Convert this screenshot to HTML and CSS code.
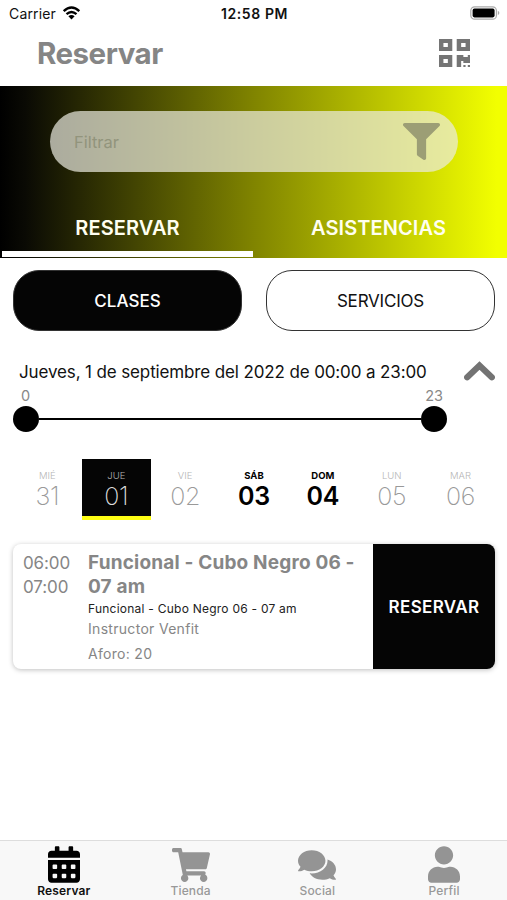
FILE: index.html
```html
<!DOCTYPE html>
<html lang="es">
<head>
<meta charset="utf-8">
<title>Reservar</title>
<link rel="stylesheet" href="styles.css">
</head>
<body>
<div class="app">
  <div class="status">
    <span class="carrier"><span class="carrier-name">Carrier</span>
      <svg class="wifi" viewBox="0 0 18 14"><path d="M1.2 5.2Q9-2 16.8 5.2M4 8.2Q9 3.8 14 8.2" fill="none" stroke="#000" stroke-width="2.4"/><path d="M5.9 10.3Q9 7.8 12.1 10.3L9 13.5z"/></svg>
    </span>
    <span class="clock">12:58 PM</span>
    <svg class="battery" viewBox="0 0 30 14"><rect x=".8" y=".8" width="25.6" height="12.4" rx="3.8" fill="#fff" stroke="#aaa" stroke-width="1.2"/><rect x="2.6" y="2.6" width="22" height="8.8" rx="1.8"/><path d="M27.8 4.8q3.2 2.2 0 4.4z" fill="#aaa"/></svg>
  </div>
  <header class="header">
    <h1>Reservar</h1>
    <svg class="qr" viewBox="0 32 448 448" preserveAspectRatio="none"><path d="M0 224h192V32H0v192zM64 96h64v64H64V96zm192-64v192h192V32H256zm128 128h-64V96h64v64zM0 480h192V288H0v192zm64-128h64v64H64v-64zm352-64h32v128h-96v-32h-32v96h-64V288h96v32h64v-32zm0 160h32v32h-32v-32zm-64 0h32v32h-32v-32z"/></svg>
  </header>
  <section class="hero">
    <div class="search">
      <span class="placeholder">Filtrar</span>
      <svg class="filter" viewBox="0 0 512 512"><path d="M487.976 0H24.028C2.71 0-8.047 25.866 7.058 40.971L192 225.941V432c0 7.831 3.821 15.17 10.237 19.662l80 55.98C298.02 518.69 320 507.493 320 487.98V225.941l184.947-184.97C520.021 25.896 509.338 0 487.976 0z"/></svg>
    </div>
    <nav class="tabs">
      <div class="tab tab-active"><span>RESERVAR</span></div>
      <div class="tab"><span>ASISTENCIAS</span></div>
    </nav>
  </section>
  <div class="pills">
    <div class="pill pill-active">CLASES</div>
    <div class="pill">SERVICIOS</div>
  </div>
  <div class="range-title">
    <span>Jueves, 1 de septiembre del 2022 de 00:00 a 23:00</span>
    <svg class="chevron" viewBox="0 0 31 20"><path d="M3.200 16.300L15.500 4.600L27.800 16.300" fill="none" stroke="#737373" stroke-width="6.200" stroke-linecap="round"/></svg>
  </div>
  <div class="slider">
    <div class="slider-labels"><span>0</span><span>23</span></div>
    <div class="track"><i class="knob"></i><i class="line"></i><i class="knob"></i></div>
  </div>
  <div class="days">
    <div class="day"><small>MIÉ</small><b>31</b></div>
    <div class="day day-active"><small>JUE</small><b>01</b></div>
    <div class="day"><small>VIE</small><b>02</b></div>
    <div class="day day-bold"><small>SÁB</small><b>03</b></div>
    <div class="day day-bold"><small>DOM</small><b>04</b></div>
    <div class="day"><small>LUN</small><b>05</b></div>
    <div class="day"><small>MAR</small><b>06</b></div>
  </div>
  <article class="card">
    <div class="times"><div>06:00</div><div>07:00</div></div>
    <div class="info">
      <h2>Funcional - Cubo Negro 06 -<br>07 am</h2>
      <p class="sub">Funcional - Cubo Negro 06 - 07 am</p>
      <p class="teacher">Instructor Venfit</p>
      <p class="quota">Aforo: 20</p>
    </div>
    <div class="book"><span>RESERVAR</span></div>
  </article>
  <footer class="tabbar">
    <div class="item item-active">
      <svg width="32" height="37" viewBox="0 0 448 512"><path d="M0 464c0 26.5 21.5 48 48 48h352c26.5 0 48-21.5 48-48V192H0v272zm320-196c0-6.600 5.400-12 12-12h40c6.600 0 12 5.400 12 12v40c0 6.600-5.400 12-12 12h-40c-6.600 0-12-5.400-12-12v-40zm0 128c0-6.600 5.400-12 12-12h40c6.600 0 12 5.400 12 12v40c0 6.600-5.400 12-12 12h-40c-6.600 0-12-5.400-12-12v-40zM192 268c0-6.600 5.400-12 12-12h40c6.600 0 12 5.400 12 12v40c0 6.600-5.400 12-12 12h-40c-6.600 0-12-5.400-12-12v-40zm0 128c0-6.600 5.400-12 12-12h40c6.600 0 12 5.400 12 12v40c0 6.600-5.400 12-12 12h-40c-6.600 0-12-5.400-12-12v-40zM64 268c0-6.600 5.400-12 12-12h40c6.600 0 12 5.400 12 12v40c0 6.600-5.400 12-12 12H76c-6.600 0-12-5.400-12-12v-40zm0 128c0-6.600 5.400-12 12-12h40c6.600 0 12 5.400 12 12v40c0 6.600-5.400 12-12 12H76c-6.600 0-12-5.400-12-12v-40zM400 64h-48V16c0-8.800-7.200-16-16-16h-32c-8.800 0-16 7.200-16 16v48H160V16c0-8.800-7.200-16-16-16h-32c-8.800 0-16 7.200-16 16v48H48C21.500 64 0 85.500 0 112v48h448v-48c0-26.500-21.500-48-48-48z"/></svg>
      <span class="label">Reservar</span>
    </div>
    <div class="item">
      <svg width="38" height="34" viewBox="0 0 576 512"><path d="M528.120 301.319l47.273-208C578.806 78.301 567.391 64 551.990 64H159.208l-9.166-44.810C147.758 8.021 137.930 0 126.529 0H24C10.745 0 0 10.745 0 24v16c0 13.255 10.745 24 24 24h69.883l70.248 343.435C147.325 417.100 136 435.222 136 456c0 30.928 25.072 56 56 56s56-25.072 56-56c0-15.674-6.447-29.835-16.824-40h209.647C430.447 426.165 424 440.326 424 456c0 30.928 25.072 56 56 56s56-25.072 56-56c0-22.172-12.888-41.332-31.579-50.405l5.517-24.276c3.413-15.018-8.002-29.319-23.403-29.319H218.117l-6.545-32h293.145c11.206 0 20.920-7.754 23.403-18.681z"/></svg>
      <span class="label">Tienda</span>
    </div>
    <div class="item">
      <svg width="38" height="34" viewBox="0 0 576 512"><path d="M416 192c0-88.400-93.100-160-208-160S0 103.600 0 192c0 34.300 14.100 65.900 38 92-13.400 30.200-35.500 54.200-35.800 54.500-2.200 2.300-2.800 5.700-1.500 8.700S4.800 352 8 352c36.600 0 66.900-12.300 88.700-25 32.200 15.700 70.300 25 111.300 25 114.900 0 208-71.600 208-160zm122 220c23.900-26 38-57.700 38-92 0-66.900-53.500-124.200-129.300-148.100.9 6.600 1.300 13.300 1.300 20.100 0 105.900-107.700 192-240 192-10.800 0-21.300-.8-31.700-1.900C207.800 439.600 281.800 480 368 480c41 0 79.100-9.200 111.300-25 21.800 12.700 52.100 25 88.700 25 3.200 0 6.100-1.900 7.300-4.800 1.300-2.900.7-6.300-1.500-8.700-.3-.3-22.400-24.200-35.800-54.500z"/></svg>
      <span class="label">Social</span>
    </div>
    <div class="item">
      <svg width="32" height="37" viewBox="0 0 448 512"><path d="M224 256c70.700 0 128-57.300 128-128S294.700 0 224 0 96 57.300 96 128s57.300 128 128 128zm89.600 32h-16.700c-22.200 10.200-46.900 16-72.900 16s-50.600-5.800-72.900-16h-16.700C60.200 288 0 348.200 0 422.400V464c0 26.500 21.500 48 48 48h352c26.500 0 48-21.500 48-48v-41.600c0-74.200-60.200-134.400-134.400-134.400z"/></svg>
      <span class="label">Perfil</span>
    </div>
  </footer>
</div>
</body>
</html>
```

FILE: styles.css
```css
* { box-sizing: border-box; }
body { margin: 0; background: #fff; font-family: Inter, "Liberation Sans", sans-serif; color: #111; }
h1, h2, p { margin: 0; }
svg { display: block; flex: none; }
.app { width: 507px; height: 900px; display: flex; flex-direction: column; overflow: hidden; white-space: nowrap; }

.status { height: 27px; display: grid; grid-template-columns: 1fr auto 1fr; align-items: center; padding: 0 7px 0 9px; }
.carrier { display: flex; align-items: center; gap: 6px; font-size: 14px; }
.carrier-name { letter-spacing: 0.15px; }
.wifi { width: 19px; height: 14px; margin-top: -1px; }
.clock { font-size: 14px; font-weight: 600; letter-spacing: 0.6px; }
.battery { width: 30px; height: 14px; justify-self: end; margin-top: -1px; }

.header { height: 59px; display: flex; justify-content: space-between; align-items: flex-start; padding: 8px 37px 0 37px; }
.header h1 { font-size: 29.500px; line-height: 36px; font-weight: 700; color: #858585; letter-spacing: -0.5px; }
.qr { width: 31px; height: 28px; margin-top: 4px; fill: #757575; }

.hero { height: 172px; background: linear-gradient(90deg, #000 0%, #0a0a04 5%, #808400 50%, #f2ff00 98%); padding-top: 25px; display: flex; flex-direction: column; }
.search { width: 408px; height: 61px; margin-left: 50px; border-radius: 31px; background: rgba(235, 235, 225, 0.7); display: flex; justify-content: space-between; align-items: center; padding: 0 18px 0 24px; }
.placeholder { font-size: 16.500px; color: #92947c; }
.filter { width: 37px; height: 37px; fill: #9c9e75; }
.tabs { margin-top: auto; height: 61px; display: flex; padding: 0 3px 1px 2px; }
.tab { flex: 1; display: flex; justify-content: center; padding-top: 18px; border-bottom: 6px solid transparent; color: #fffff0; font-size: 20px; line-height: 26px; font-weight: 600; letter-spacing: 0.1px; }
.tab-active { border-bottom-color: #fff; }

.pills { display: flex; gap: 24px; padding: 12px 12px 0 13px; height: 73px; }
.pill { flex: 1; border: 1px solid #333; border-radius: 26px; display: flex; align-items: center; justify-content: center; font-size: 17px; letter-spacing: -0.2px; }
.pill-active { background: #050505; color: #fff; font-weight: 500; letter-spacing: 0; }

.range-title { height: 54px; display: flex; justify-content: space-between; align-items: flex-end; padding: 0 12px 0 19px; font-size: 17px; line-height: 26px; letter-spacing: -0.130px; }
.chevron { width: 31px; height: 20px; margin-bottom: 4px; }
.slider { width: 434px; margin-left: 13px; }
.slider-labels { height: 21px; display: flex; justify-content: space-between; padding: 0 4px 0 8px; font-size: 14.500px; line-height: 21px; color: #888; }
.track { display: flex; align-items: center; }
.knob { width: 26px; height: 26px; border-radius: 50%; background: #000; }
.line { flex: 1; height: 2px; background: #000; }

.days { display: grid; grid-template-columns: repeat(7, 1fr); margin: 27px 12px 0 13px; height: 61px; }
.day { display: flex; flex-direction: column; align-items: center; padding-top: 11px; color: #b5b5b5; border-bottom: 4px solid transparent; }
.day small { font-size: 9.500px; line-height: 12px; font-weight: 300; }
.day b { font-size: 25px; line-height: 28px; font-weight: 200; letter-spacing: -0.3px; color: #999; }
.day-active { background: #050505; border-bottom-color: #ffff14; }
.day-active b { color: #ddd; }
.day-bold, .day-bold b { color: #000; font-weight: 600; }
.day-bold small { font-weight: 700; }

.card { height: 125px; margin: 24px 12px 0 13px; border-radius: 8px; display: flex; box-shadow: 0 1px 5px rgba(0, 0, 0, 0.25); overflow: hidden; }
.times { width: 75px; padding: 8px 0 0 10px; font-size: 17px; line-height: 23.500px; color: #868686; letter-spacing: -0.1px; }
.info { flex: 1; padding-top: 7px; color: #868686; }
.info h2 { font-size: 19px; line-height: 23.500px; font-weight: 700; letter-spacing: 0.180px; }
.sub { font-size: 12px; line-height: 20px; color: #222; letter-spacing: 0.240px; margin-top: 1px; }
.teacher { font-size: 14px; line-height: 20px; letter-spacing: 0.3px; }
.quota { font-size: 14px; line-height: 20px; margin-top: 5px; letter-spacing: 0.3px; }
.book { width: 122px; background: #050505; color: #fff; display: flex; align-items: center; justify-content: center; font-size: 17px; font-weight: 600; letter-spacing: 0.350px; }

.tabbar { margin-top: auto; height: 60px; background: #f8f8f8; border-top: 1px solid #ddd; display: grid; grid-template-columns: repeat(4, 1fr); }
.item { display: grid; grid-template-rows: 37px 15px; justify-items: center; align-items: center; align-content: start; padding: 5px 0 0 1px; fill: #949494; color: #999; font-size: 12px; font-weight: 500; line-height: 15px; letter-spacing: 0.150px; }
.item-active { fill: #000; color: #111; font-weight: 600; }
```
